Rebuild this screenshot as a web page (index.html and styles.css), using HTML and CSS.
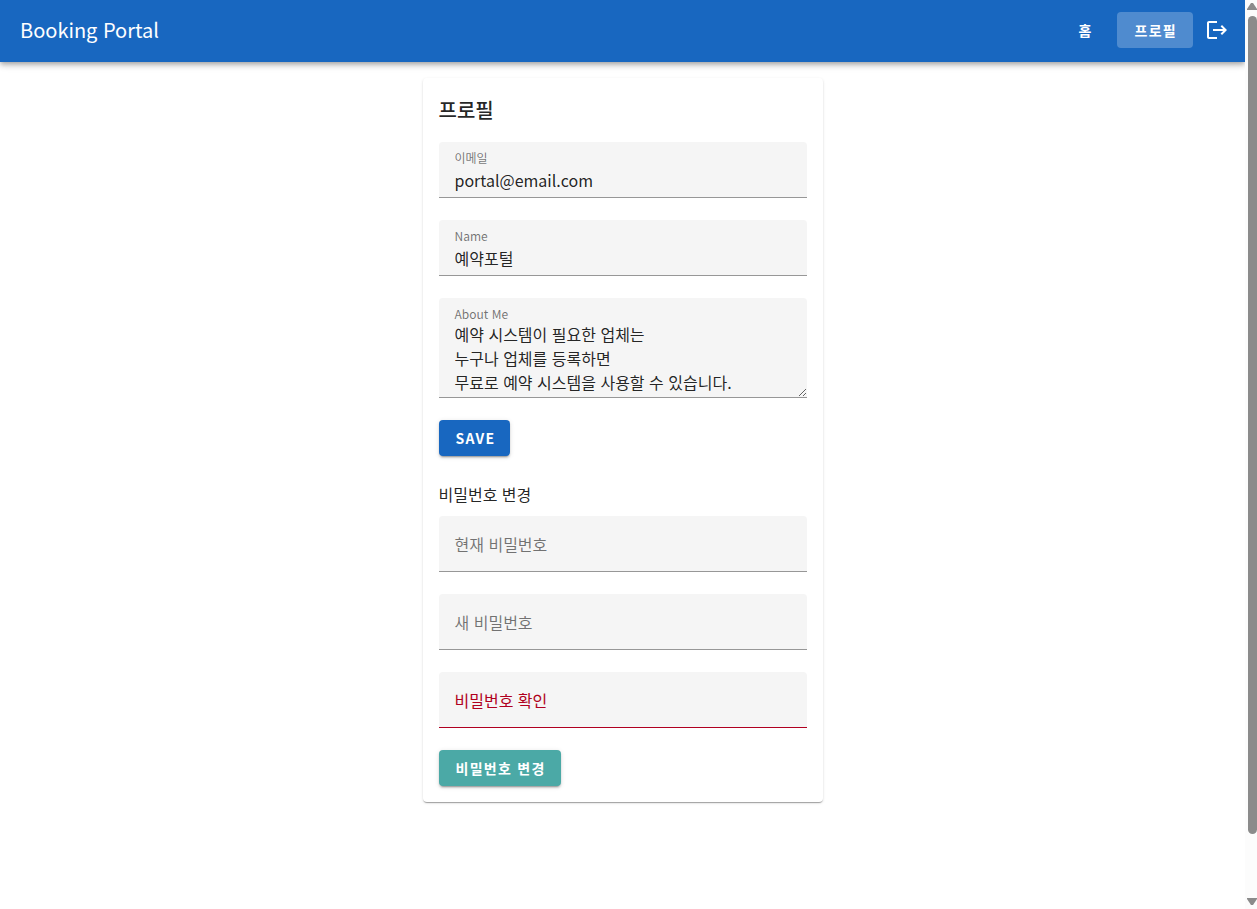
FILE: index.html
```html
<!DOCTYPE html>
<html lang="ko">
<head>
  <meta charset="UTF-8">
  <meta name="viewport" content="width=device-width, initial-scale=1.0">
  <title>Booking Portal</title>
  <link rel="stylesheet" href="styles.css">
</head>
<body>
  <div class="page">
    <header class="app-bar">
      <h1 class="app-title">Booking Portal</h1>
      <nav>
        <a class="nav-link" href="#home">홈</a>
        <a class="nav-link active" href="#profile">프로필</a>
        <button type="button" class="icon-button" aria-label="Logout">
          <svg viewBox="0 0 24 24" width="24" height="24" fill="currentColor">
            <path d="M17 7l-1.41 1.41L18.17 11H8v2h10.17l-2.58 2.58L17 17l5-5zM4 5h8V3H4c-1.1 0-2 .9-2 2v14c0 1.1.9 2 2 2h8v-2H4V5z"/>
          </svg>
        </button>
      </nav>
    </header>

    <main class="card">
      <h2>프로필</h2>
      <form id="profile-form">
        <div class="field filled">
          <label for="email">이메일</label>
          <input type="email" id="email" value="portal@email.com">
        </div>
        <div class="field filled">
          <label for="name">Name</label>
          <input type="text" id="name" value="예약포털">
        </div>
        <div class="field filled">
          <label for="about">About Me</label>
          <textarea id="about" rows="3">예약 시스템이 필요한 업체는
누구나 업체를 등록하면
무료로 예약 시스템을 사용할 수 있습니다.</textarea>
        </div>
        <button type="submit" class="button">SAVE</button>
      </form>

      <h3>비밀번호 변경</h3>
      <form id="password-form">
        <div class="field">
          <label for="current-password">현재 비밀번호</label>
          <input type="password" id="current-password">
        </div>
        <div class="field">
          <label for="new-password">새 비밀번호</label>
          <input type="password" id="new-password">
        </div>
        <div class="field invalid">
          <label for="confirm-password">비밀번호 확인</label>
          <input type="password" id="confirm-password">
        </div>
        <button type="submit" class="button secondary">비밀번호 변경</button>
      </form>
    </main>
  </div>

  <div class="scrollbar" aria-hidden="true">
    <svg viewBox="0 0 10 7" width="10" height="7"><path d="M4 0h2l4 6v1H0V6z"/></svg>
    <div class="scroll-thumb"></div>
    <svg class="scroll-down" viewBox="0 0 10 7" width="10" height="7"><path d="M0 0h10v1L6 7H4L0 1z"/></svg>
  </div>
</body>
</html>
```
FILE: styles.css
```css
* {
  box-sizing: border-box;
}
body {
  display: flex;
  margin: 0;
  background: #fff;
  color: rgba(0, 0, 0, 0.87);
  font-family: "Noto Sans CJK KR", sans-serif;
  font-size: 16px;
}
.page {
  flex: 1;
  min-height: 100vh;
}

/* app bar */
.app-bar {
  display: flex;
  align-items: center;
  justify-content: space-between;
  padding: 12px 16px 14px 20px;
  background: #1867c0;
  color: #fff;
  box-shadow: 0 2px 4px -1px rgba(0, 0, 0, 0.2), 0 4px 5px rgba(0, 0, 0, 0.14), 0 1px 10px rgba(0, 0, 0, 0.12);
}
.app-title {
  margin: 0;
  font-size: 20px;
  font-weight: 400;
  line-height: 36px;
}
nav {
  display: flex;
  align-items: center;
  gap: 8px;
}
.nav-link {
  padding: 0 16px 0 18px;
  border-radius: 4px;
  color: #fff;
  font-size: 14px;
  font-weight: 700;
  letter-spacing: 0.09em;
  line-height: 36px;
  text-decoration: none;
}
.nav-link.active {
  background: rgba(255, 255, 255, 0.24);
}
.icon-button {
  display: flex;
  margin-left: 4px;
  padding: 0;
  border: none;
  background: none;
  color: #fff;
  cursor: pointer;
}

/* profile card */
.card {
  max-width: 400px;
  margin: 16px auto;
  padding: 16px;
  border-radius: 4px;
  box-shadow: 0 2px 1px -1px rgba(0, 0, 0, 0.2), 0 1px 1px rgba(0, 0, 0, 0.14), 0 1px 3px rgba(0, 0, 0, 0.12);
}
h2 {
  margin: 0 0 16px;
  font-size: 20px;
  font-weight: 500;
  line-height: 32px;
}
h3 {
  margin: 24px 0 8px;
  font-size: 16px;
  font-weight: 400;
  line-height: 28px;
}

/* text fields */
.field {
  position: relative;
  margin-bottom: 22px;
  border-bottom: 1px solid #979797;
  border-radius: 4px 4px 0 0;
  background: #f5f5f5;
}
.field label {
  position: absolute;
  top: 16px;
  left: 16px;
  color: rgba(0, 0, 0, 0.54);
  line-height: 24px;
  pointer-events: none;
}
.field.filled label {
  top: 8px;
  font-size: 12px;
  line-height: 16px;
}
.field input,
.field textarea {
  display: block;
  width: 100%;
  border: none;
  outline: none;
  background: none;
  color: inherit;
  font: inherit;
}
.field input {
  height: 55px;
  padding: 20px 16px 0;
}
.field textarea {
  padding: 0 16px 3px;
  line-height: 24px;
  resize: vertical;
}
.field:has(textarea) {
  padding-top: 24px;
}
.field.invalid {
  border-color: #b00020;
}
.field.invalid label {
  color: #b00020;
}

/* buttons */
.button {
  display: block;
  height: 36px;
  padding: 0 15px 0 17px;
  border: none;
  border-radius: 4px;
  background: #1867c0;
  color: #fff;
  font-family: inherit;
  font-size: 14px;
  font-weight: 700;
  letter-spacing: 0.09em;
  box-shadow: 0 3px 1px -2px rgba(0, 0, 0, 0.2), 0 2px 2px rgba(0, 0, 0, 0.14), 0 1px 5px rgba(0, 0, 0, 0.12);
  cursor: pointer;
}
.button.secondary {
  background: #4ba9a6;
}

/* page scrollbar */
.scrollbar {
  position: sticky;
  top: 0;
  display: flex;
  flex-direction: column;
  align-items: center;
  width: 12px;
  height: 100vh;
  padding: 3px 0 4px 2px;
  background: #fcfcfc;
  fill: #8b8b8b;
}
.scroll-thumb {
  width: 9px;
  height: 90vh;
  margin-top: 6px;
  border-radius: 5px;
  background: #8b8b8b;
}
.scroll-down {
  margin-top: auto;
}
```
